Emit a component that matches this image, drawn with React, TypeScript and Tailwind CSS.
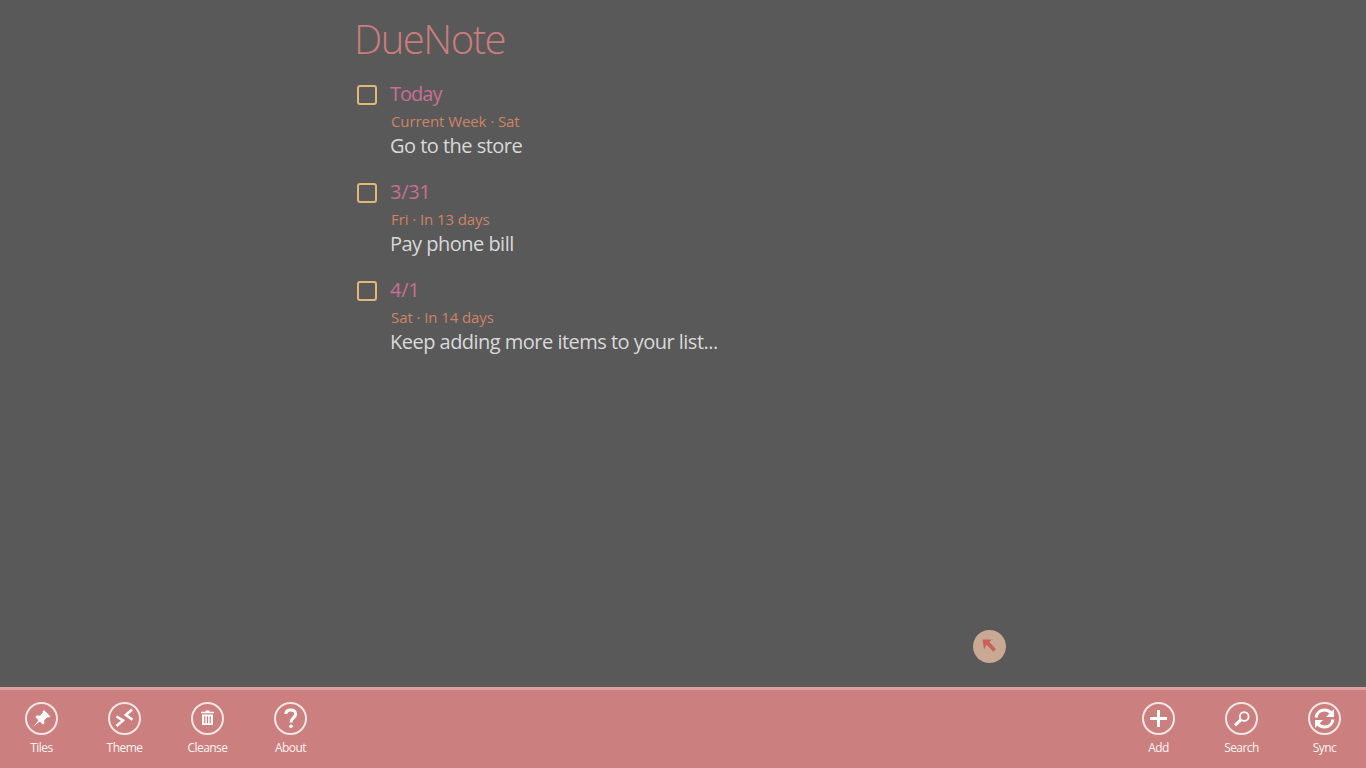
const sans = "font-['Open_Sans','Noto_Sans',sans-serif]";

const items = [
  { date: "Today", sub: "Current Week · Sat", text: "Go to the store", track: "tracking-[-1px]" },
  { date: "3/31", sub: "Fri · In 13 days", text: "Pay phone bill", track: "tracking-[-0.3px]" },
  { date: "4/1", sub: "Sat · In 14 days", text: "Keep adding more items to your list...", track: "tracking-[-0.3px]" },
];

function Pin() {
  return (
    <svg viewBox="0 0 33 33" className="absolute inset-0 h-full w-full" fill="#fff">
      <path d="M19 8 L25.5 14.5 L23.6 15.5 L22.2 15.2 L19.2 18.2 L19.4 21.2 L18 22.6 L14.8 19.4 L8.5 24.5 L13.6 18.2 L10.4 15 L11.8 13.6 L14.8 13.8 L17.8 10.8 L17.5 9.4 Z" />
    </svg>
  );
}
function Theme() {
  return (
    <svg viewBox="0 0 33 33" className="absolute inset-0 h-full w-full" fill="none" stroke="#fff" strokeWidth="2.5">
      <path d="M8.5 14.5 L15 18.5 L8.5 24" />
      <path d="M24 7.5 L17.8 13 L24.5 17.8" />
    </svg>
  );
}
function Trash() {
  return (
    <svg viewBox="0 0 33 33" className="absolute inset-0 h-full w-full" fill="#fff">
      <path d="M14.5 8.5h4v1.2h4.5v1.6H10V9.7h4.5z" />
      <path fillRule="evenodd" d="M11 12.5h11V23H11z M13.2 14.2v7h1.2v-7z M15.9 14.2v7h1.2v-7z M18.6 14.2v7h1.2v-7z" />
    </svg>
  );
}
function Question() {
  return (
    <svg viewBox="0 0 33 33" className="absolute inset-0 h-full w-full" fill="none" stroke="#fff" strokeWidth="3">
      <path d="M11.8 12 C12 9.4 14 8 16.7 8 C19.6 8 21.6 9.6 21.6 12.2 C21.6 15.6 17 16 17 20.4" />
      <circle cx="17" cy="24.2" r="1.8" fill="#fff" stroke="none" />
    </svg>
  );
}
function Plus() {
  return (
    <svg viewBox="0 0 33 33" className="absolute inset-0 h-full w-full" fill="none" stroke="#fff" strokeWidth="3">
      <path d="M16.5 8v17M8 16.5h17" />
    </svg>
  );
}
function Search() {
  return (
    <svg viewBox="0 0 33 33" className="absolute inset-0 h-full w-full" fill="none" stroke="#fff">
      <circle cx="19.2" cy="14.5" r="4.4" strokeWidth="1.8" />
      <path d="M15.8 17.8 L10 23.3" strokeWidth="3" />
    </svg>
  );
}
function Sync() {
  return (
    <svg viewBox="0 0 33 33" className="absolute inset-0 h-full w-full" fill="none">
      <path d="M8 15.5 C8.8 10.5 12.5 8 16.5 8 C19.5 8 21.8 9.3 23.3 11.2" stroke="#fff" strokeWidth="3" />
      <path d="M26 7 V15 H18 Z" fill="#fff" />
      <path d="M25 17.5 C24.2 22.5 20.5 25 16.5 25 C13.5 25 11.2 23.7 9.7 21.8" stroke="#fff" strokeWidth="3" />
      <path d="M7 26 V18 H15 Z" fill="#fff" />
    </svg>
  );
}

function Btn({ label, icon }: { label: string; icon: React.ReactNode }) {
  return (
    <div className="flex w-[83px] flex-col items-center pt-[12px]">
      <div className="relative h-[33px] w-[33px] rounded-full border-2 border-[#f3e6e6]">
        <div className="absolute -inset-[2px]">{icon}</div>
      </div>
      <div className="mt-[5px] text-[12px] leading-[16px] tracking-[-0.55px] text-[#fbf3f3]">{label}</div>
    </div>
  );
}

export default function App() {
  return (
    <div className={`relative flex h-[768px] w-[1366px] flex-col overflow-hidden bg-[#595959] ${sans}`}>
      <main className="flex-1 pl-[355px]">
        <h1 className="-ml-[1px] mt-[13px] text-[40px] font-light leading-[52px] tracking-[-1.5px] text-[#cb7d7d]">DueNote</h1>
        <ul className="mt-[14px] flex flex-col gap-[17px]">
          {items.map((it) => (
            <li key={it.date} className="flex">
              <div className="ml-[2px] mt-[6px] h-[20px] w-[20px] rounded-[3px] border-2 border-[#e3b877]" />
              <div className="ml-[13px] w-[600px]">
                <div className={`text-[20px] leading-[30px] text-[#c96f92] ${it.track}`}>{it.date}</div>
                <div className="ml-[1px] text-[15px] leading-[24px] tracking-[-0.08px] text-[#cf8366]">{it.sub}</div>
                <div className="-mt-[1px] text-[20px] leading-[28px] tracking-[-0.52px] text-[#d9d9d9]">{it.text}</div>
              </div>
            </li>
          ))}
        </ul>
      </main>
      <div className="absolute left-[973px] top-[630px] flex h-[33px] w-[33px] items-center justify-center rounded-full bg-[#c9a993]">
        <svg viewBox="0 0 33 33" className="h-[33px] w-[33px]">
          <path d="M9.5 9.5 H18.8 L16.4 12 L22.8 19 L20.4 21.8 L13.6 14.8 L11 19.5 Z" fill="#c8605f" />
        </svg>
      </div>
      <footer className="flex h-[81px] justify-between border-t-[3px] border-[#dc9e9e] bg-[#cc7f7f]">
        <div className="flex">
          <Btn label="Tiles" icon={<Pin />} />
          <Btn label="Theme" icon={<Theme />} />
          <Btn label="Cleanse" icon={<Trash />} />
          <Btn label="About" icon={<Question />} />
        </div>
        <div className="flex">
          <Btn label="Add" icon={<Plus />} />
          <Btn label="Search" icon={<Search />} />
          <Btn label="Sync" icon={<Sync />} />
        </div>
      </footer>
    </div>
  );
}
